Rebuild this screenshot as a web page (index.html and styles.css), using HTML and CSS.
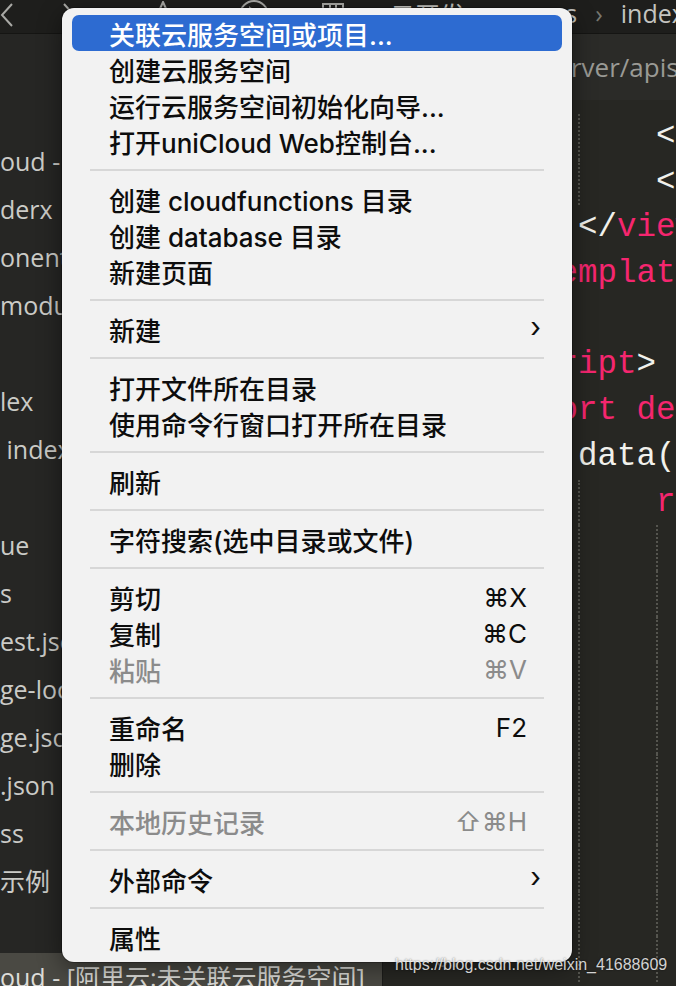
FILE: index.html
```html
<!DOCTYPE html>
<html lang="zh-CN">
<head>
    <meta charset="UTF-8">
    <meta name="viewport" content="width=device-width, initial-scale=1.0">
    <title>HBuilderX</title>
    <link rel="stylesheet" href="styles.css">
</head>
<body>
    <div class="window">
        <div class="topbar">
            <span class="nav-icon">
                <svg width="14" height="24" viewBox="0 0 14 24"><path d="M12 1 L2 12 L12 23" fill="none" stroke="#a9a9a5" stroke-width="2"/></svg>
            </span>
            <span class="nav-icon fwd">
                <svg width="14" height="24" viewBox="0 0 14 24"><path d="M2 1 L12 12 L2 23" fill="none" stroke="#a9a9a5" stroke-width="2"/></svg>
            </span>
            <span class="nav-icon star">
                <svg width="30" height="28" viewBox="0 0 30 28"><path d="M15 1 L19 10 L29 11 L21 18 L23 27 L15 22 L7 27 L9 18 L1 11 L11 10 Z" fill="none" stroke="#a9a9a5" stroke-width="2"/></svg>
            </span>
            <span class="nav-icon play">
                <svg width="32" height="32" viewBox="0 0 32 32"><circle cx="16" cy="16" r="14" fill="none" stroke="#a9a9a5" stroke-width="2"/><path d="M12 9 L23 16 L12 23 Z" fill="none" stroke="#a9a9a5" stroke-width="2"/></svg>
            </span>
            <span class="nav-icon box">
                <svg width="22" height="24" viewBox="0 0 22 24"><rect x="1" y="1" width="20" height="22" fill="none" stroke="#a9a9a5" stroke-width="2"/><path d="M8 1 V23 M14 1 V23" stroke="#a9a9a5" stroke-width="2"/></svg>
            </span>
            <div class="crumbs">
                <span>云开发</span>
                <span class="sep">›</span>
                <span>pages</span>
                <span class="sep">›</span>
                <span>index</span>
            </div>
        </div>

        <div class="main">
            <div class="sidebar">
                <div class="file">oud - [阿里云:quonaiqianqi]</div>
                <div class="file">derx</div>
                <div class="file">onents</div>
                <div class="file">modules</div>
                <div class="file"></div>
                <div class="file">lex</div>
                <div class="file">&nbsp;index.vue</div>
                <div class="file"></div>
                <div class="file">ue</div>
                <div class="file">s</div>
                <div class="file">est.json</div>
                <div class="file">ge-lock.json</div>
                <div class="file">ge.json</div>
                <div class="file">.json</div>
                <div class="file">ss</div>
                <div class="file">示例</div>
                <div class="file"></div>
                <div class="file selected">oud - [阿里云:未关联云服务空间]</div>
            </div>

            <div class="editor">
                <div class="path">omponents/server/apis</div>
                <div class="code">
                    <div class="line"><span class="num">43</span><span class="src"><span class="ind"></span><span class="ind guide"></span>&lt;</span></div>
                    <div class="line"><span class="num">44</span><span class="src"><span class="ind"></span><span class="ind guide"></span>&lt;</span></div>
                    <div class="line"><span class="num">45</span><span class="src"><span class="ind"></span>&lt;/<span class="kw">view</span>&gt;</span></div>
                    <div class="line"><span class="num">46</span><span class="src">&lt;/<span class="kw">template</span>&gt;</span></div>
                    <div class="line"><span class="num">47</span><span class="src"></span></div>
                    <div class="line"><span class="num">48</span><span class="src">&lt;<span class="kw">script</span>&gt;</span></div>
                    <div class="line"><span class="num">49</span><span class="src"><span class="kw">export default</span> {</span></div>
                    <div class="line"><span class="num">50</span><span class="src"><span class="ind"></span>data() {</span></div>
                    <div class="line"><span class="num">51</span><span class="src"><span class="ind"></span><span class="ind guide"></span><span class="kw">return</span> {</span></div>
                    <div class="line"><span class="num">52</span><span class="src"><span class="ind"></span><span class="ind guide"></span><span class="ind guide"></span></span></div>
                    <div class="line"><span class="num">53</span><span class="src"><span class="ind"></span><span class="ind guide"></span><span class="ind guide"></span></span></div>
                    <div class="line"><span class="num">54</span><span class="src"><span class="ind"></span><span class="ind guide"></span><span class="ind guide"></span></span></div>
                    <div class="line"><span class="num">55</span><span class="src"><span class="ind"></span><span class="ind guide"></span><span class="ind guide"></span></span></div>
                    <div class="line"><span class="num">56</span><span class="src"><span class="ind"></span><span class="ind guide"></span><span class="ind guide"></span></span></div>
                    <div class="line"><span class="num">57</span><span class="src"><span class="ind"></span><span class="ind guide"></span><span class="ind guide"></span></span></div>
                    <div class="line"><span class="num">58</span><span class="src"><span class="ind"></span><span class="ind guide"></span><span class="ind guide"></span></span></div>
                    <div class="line"><span class="num">59</span><span class="src"><span class="ind"></span><span class="ind guide"></span><span class="ind guide"></span></span></div>
                    <div class="line"><span class="num">60</span><span class="src"><span class="ind"></span><span class="ind guide"></span><span class="ind guide"></span></span></div>
                    <div class="line"><span class="num">61</span><span class="src"><span class="ind"></span><span class="ind guide"></span><span class="ind guide"></span></span></div>
                </div>
            </div>
        </div>
    </div>

    <div class="menu">
        <div class="item active"><span class="label">关联云服务空间或项目...</span></div>
        <div class="item"><span class="label">创建云服务空间</span></div>
        <div class="item"><span class="label">运行云服务空间初始化向导...</span></div>
        <div class="item"><span class="label">打开uniCloud Web控制台...</span></div>
        <div class="divider"></div>
        <div class="item"><span class="label">创建 cloudfunctions 目录</span></div>
        <div class="item"><span class="label">创建 database 目录</span></div>
        <div class="item"><span class="label">新建页面</span></div>
        <div class="divider"></div>
        <div class="item"><span class="label">新建</span><span class="arrow">›</span></div>
        <div class="divider"></div>
        <div class="item"><span class="label">打开文件所在目录</span></div>
        <div class="item"><span class="label">使用命令行窗口打开所在目录</span></div>
        <div class="divider"></div>
        <div class="item"><span class="label">刷新</span></div>
        <div class="divider"></div>
        <div class="item"><span class="label">字符搜索(选中目录或文件)</span></div>
        <div class="divider"></div>
        <div class="item"><span class="label">剪切</span><span class="key">⌘X</span></div>
        <div class="item"><span class="label">复制</span><span class="key">⌘C</span></div>
        <div class="item disabled"><span class="label">粘贴</span><span class="key">⌘V</span></div>
        <div class="divider"></div>
        <div class="item"><span class="label">重命名</span><span class="key">F2</span></div>
        <div class="item"><span class="label">删除</span></div>
        <div class="divider"></div>
        <div class="item disabled"><span class="label">本地历史记录</span><span class="key">⇧⌘H</span></div>
        <div class="divider"></div>
        <div class="item"><span class="label">外部命令</span><span class="arrow">›</span></div>
        <div class="divider"></div>
        <div class="item"><span class="label">属性</span></div>
    </div>

    <div class="watermark">https://blog.csdn.net/weixin_41688609</div>
</body>
</html>
```

FILE: styles.css
```css
body {
    margin: 0;
    width: 676px;
    height: 986px;
    overflow: hidden;
    background-color: #272723;
    font-family: "Open Sans", "Noto Sans CJK SC", sans-serif;
}
.window {
    display: grid;
    grid-template-rows: 34px 1fr;
    height: 986px;
}

/* top toolbar */
.topbar {
    display: flex;
    align-items: center;
    background-color: #1e1e1c;
    border-bottom: 1px solid #151513;
    overflow: hidden;
    white-space: nowrap;
}
.nav-icon {
    display: flex;
    margin-top: -4px;
}
.nav-icon.fwd {
    margin-left: 48px;
}
.nav-icon.star {
    margin-left: 72px;
}
.nav-icon.play {
    margin-left: 60px;
}
.nav-icon.box {
    margin-left: 52px;
}
.crumbs {
    display: flex;
    gap: 18px;
    margin-left: 46px;
    margin-top: -6px;
    font-size: 25px;
    color: #c4c4c0;
}
.crumbs .sep {
    color: #77776f;
}

.main {
    display: grid;
    grid-template-columns: 382px 1fr;
    overflow: hidden;
}

/* file tree */
.sidebar {
    padding-top: 103px;
    background-color: #262624;
    overflow: hidden;
}
.file {
    height: 48px;
    line-height: 48px;
    font-size: 25px;
    color: #cbcbc7;
    white-space: nowrap;
    overflow: hidden;
}
.file.selected {
    background-color: #4a4943;
    color: #dcdcd8;
}

/* editor */
.editor {
    display: flex;
    flex-direction: column;
    overflow: hidden;
    border-left: 1px solid #1c1c1a;
}
.path {
    flex: none;
    height: 66px;
    line-height: 66px;
    padding-left: 12px;
    font-size: 26px;
    color: #9a9a95;
    background-color: #2b2b28;
    white-space: nowrap;
}
.code {
    padding-top: 14px;
    font-family: "Liberation Mono", monospace;
    font-size: 32.5px;
    color: #f1f1ec;
}
.line {
    display: flex;
    height: 45.7px;
    line-height: 45.7px;
    white-space: pre;
}
.num {
    flex: none;
    width: 78px;
    padding-right: 20px;
    text-align: right;
    font-family: "Open Sans", sans-serif;
    font-size: 22px;
    color: #62625c;
}
.src {
    padding-left: 19px;
}
.ind {
    display: inline-block;
    width: 4ch;
    height: 45.7px;
    vertical-align: top;
    box-sizing: border-box;
}
.ind.guide {
    border-left: 2px dotted #55554f;
}
.kw {
    color: #f5266f;
}

/* context menu */
.menu {
    position: absolute;
    left: 62px;
    top: 8px;
    width: 510px;
    box-sizing: border-box;
    padding: 7px 10px;
    background-color: #f2f2f2;
    border-radius: 12px;
    box-shadow: 0 6px 24px rgba(0, 0, 0, 0.45), 0 0 0 1px rgba(0, 0, 0, 0.25);
    font-family: "Inter", "Noto Sans CJK SC", sans-serif;
}
.item {
    display: flex;
    align-items: center;
    height: 36px;
    padding: 0 21px 0 37px;
    border-radius: 7px;
    font-size: 26px;
    font-weight: 500;
    color: #0d0d0d;
    white-space: nowrap;
}
.item.active {
    background-color: #2d6bd1;
    color: #fff;
}
.item.disabled {
    color: #8b8b8b;
}
.label {
    flex: 1;
}
.key {
    margin-right: 14px;
    font-family: "Inter", "DejaVu Sans", sans-serif;
    font-weight: 400;
}
.arrow {
    font-size: 28px;
    font-weight: 400;
    margin-top: -4px;
}
.divider {
    height: 2px;
    margin: 10px 18px;
    background-color: #d7d7d7;
}

.watermark {
    position: absolute;
    left: 395px;
    top: 956px;
    font-family: "Liberation Sans", Arial, sans-serif;
    font-size: 16px;
    color: rgba(255, 255, 255, 0.82);
    text-shadow: 0 0 2px rgba(0, 0, 0, 0.6);
}
```
